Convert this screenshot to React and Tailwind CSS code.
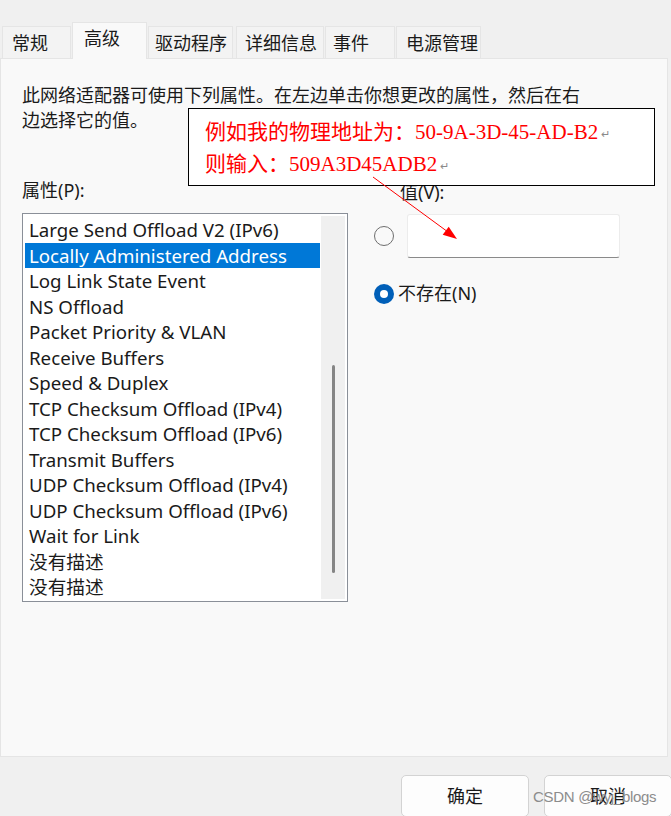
import React from 'react';

const tabs = [
  { label: '常规', w: 'w-[69px]', pl: 'pl-[9px]' },
  { label: '高级', w: 'w-[75px]', pl: 'pl-[11px]', active: true },
  { label: '驱动程序', w: 'w-[85px]', pl: 'pl-[6px]' },
  { label: '详细信息', w: 'w-[88px]', pl: 'pl-[8px]' },
  { label: '事件', w: 'w-[70px]', pl: 'pl-[7px]' },
  { label: '电源管理', w: 'w-[85px]', pl: 'pl-[9px]' },
];

const properties = [
  'Large Send Offload V2 (IPv6)',
  'Locally Administered Address',
  'Log Link State Event',
  'NS Offload',
  'Packet Priority & VLAN',
  'Receive Buffers',
  'Speed & Duplex',
  'TCP Checksum Offload (IPv4)',
  'TCP Checksum Offload (IPv6)',
  'Transmit Buffers',
  'UDP Checksum Offload (IPv4)',
  'UDP Checksum Offload (IPv6)',
  'Wait for Link',
  '没有描述',
  '没有描述',
];

const uiFont = "font-['Noto_Sans','Noto_Sans_CJK_SC',sans-serif]";

const App = () => {
  return (
    <div className={`relative w-[671px] h-[816px] overflow-hidden bg-[#f0f0f0] text-[#1a1a1a] ${uiFont}`}>
      {/* tabs */}
      <div className="flex items-end h-[58px] pl-[2px] gap-[1px]">
        {tabs.map((tab, i) => (
          <div
            key={i}
            className={
              tab.active
                ? `${tab.w} ${tab.pl} h-[37px] -mb-px relative z-10 bg-[#f9f9f9] border border-b-0 border-[#e5e5e5] text-[18px] leading-[30px]`
                : `${tab.w} ${tab.pl} h-[32px] bg-[#f3f3f3] border border-b-0 border-[#e5e5e5] text-[18px] leading-[32px] ${i === 3 ? 'ml-[2px]' : ''}`
            }
          >
            {tab.label}
          </div>
        ))}
      </div>

      {/* panel */}
      <div className="h-[699px] mr-[3px] bg-[#f9f9f9] border border-[#e5e5e5] pt-[24px] pl-[21px]">
        <p className="w-[565px] text-[18px] leading-[25px]">
          此网络适配器可使用下列属性。在左边单击你想更改的属性，然后在右边选择它的值。
        </p>

        <div className="flex mt-[45px]">
          <div>
            <div className="text-[18px] leading-[25px]">属性(P):</div>
            <div className="mt-[10px] w-[326px] h-[389px] border border-[#8a8f98] bg-white flex p-[2px]">
              <div className="flex-1 pt-px">
                {properties.map((p, i) => (
                  <div
                    key={i}
                    className={`h-[25.5px] pl-[4px] text-[18.7px] leading-[25.5px] whitespace-nowrap ${
                      i === 1 ? 'bg-[#0078d7] text-white' : ''
                    }`}
                  >
                    {p}
                  </div>
                ))}
              </div>
              <div className="w-[24px] ml-[1px] bg-[#f0f0f0] flex justify-center pt-[149px]">
                <div className="w-[3px] h-[208px] rounded-full bg-[#858585]" />
              </div>
            </div>
          </div>

          <div className="ml-[26px] pt-[2px]">
            <div className="pl-[26px] text-[18px] leading-[25px]">值(V):</div>
            <div className="flex items-center mt-[9px]">
              <div className="w-[20px] h-[20px] rounded-full border-[1.5px] border-[#6e6e6e] bg-[#f9f9f9]" />
              <div className="ml-[13px] w-[213px] h-[44px] bg-white border border-[#ececec] border-b-[#8a8a8a] rounded-[3px]" />
            </div>
            <div className="flex items-center mt-[23px]">
              <div className="w-[20px] h-[20px] rounded-full bg-[#005fb8] flex items-center justify-center">
                <div className="w-[8px] h-[8px] rounded-full bg-white" />
              </div>
              <span className="ml-[4px] text-[18px] leading-[25px]">不存在(N)</span>
            </div>
          </div>
        </div>
      </div>

      {/* footer buttons */}
      <div className="flex pl-[401px] pt-[18px] gap-[15px]">
        <button className="shrink-0 w-[128px] h-[42px] bg-[#fdfdfd] border border-[#d3d3d3] rounded-[5px] text-[18px] text-center">
          确定
        </button>
        <button className="shrink-0 w-[128px] h-[42px] bg-[#fdfdfd] border border-[#d3d3d3] rounded-[5px] text-[18px] text-center">
          取消
        </button>
      </div>

      {/* annotation box */}
      <div className="absolute left-[188px] top-[108px] w-[467px] h-[78px] bg-white border-[1.5px] border-black pl-[16px] pt-[8px] text-[21px] leading-[30px] text-[#ff0000] font-['Liberation_Serif','Noto_Sans_CJK_SC',serif]">
        <div className="whitespace-nowrap">
          例如我的物理地址为：50-9A-3D-45-AD-B2
          <span className="ml-[3px] text-[11px] text-[#8a8a8a] align-middle">↵</span>
        </div>
        <div className="whitespace-nowrap">
          则输入：509A3D45ADB2
          <span className="ml-[3px] text-[11px] text-[#8a8a8a] align-middle">↵</span>
        </div>
      </div>

      {/* red arrow */}
      <svg className="absolute left-[360px] top-[170px]" width="110" height="80" viewBox="0 0 110 80">
        <line x1="13" y1="7" x2="88" y2="62" stroke="#ff0000" strokeWidth="1" />
        <polygon points="97,69 82.7,64.7 88.7,56.7" fill="#ff0000" />
      </svg>

      {/* watermark */}
      <div className="absolute left-[533px] top-[787px] text-[15px] leading-[20px] text-[#8c8c8c] font-['Liberation_Sans',sans-serif] tracking-[-0.3px] whitespace-nowrap">
        CSDN @wyj_blogs
      </div>
    </div>
  );
};

export default App;
